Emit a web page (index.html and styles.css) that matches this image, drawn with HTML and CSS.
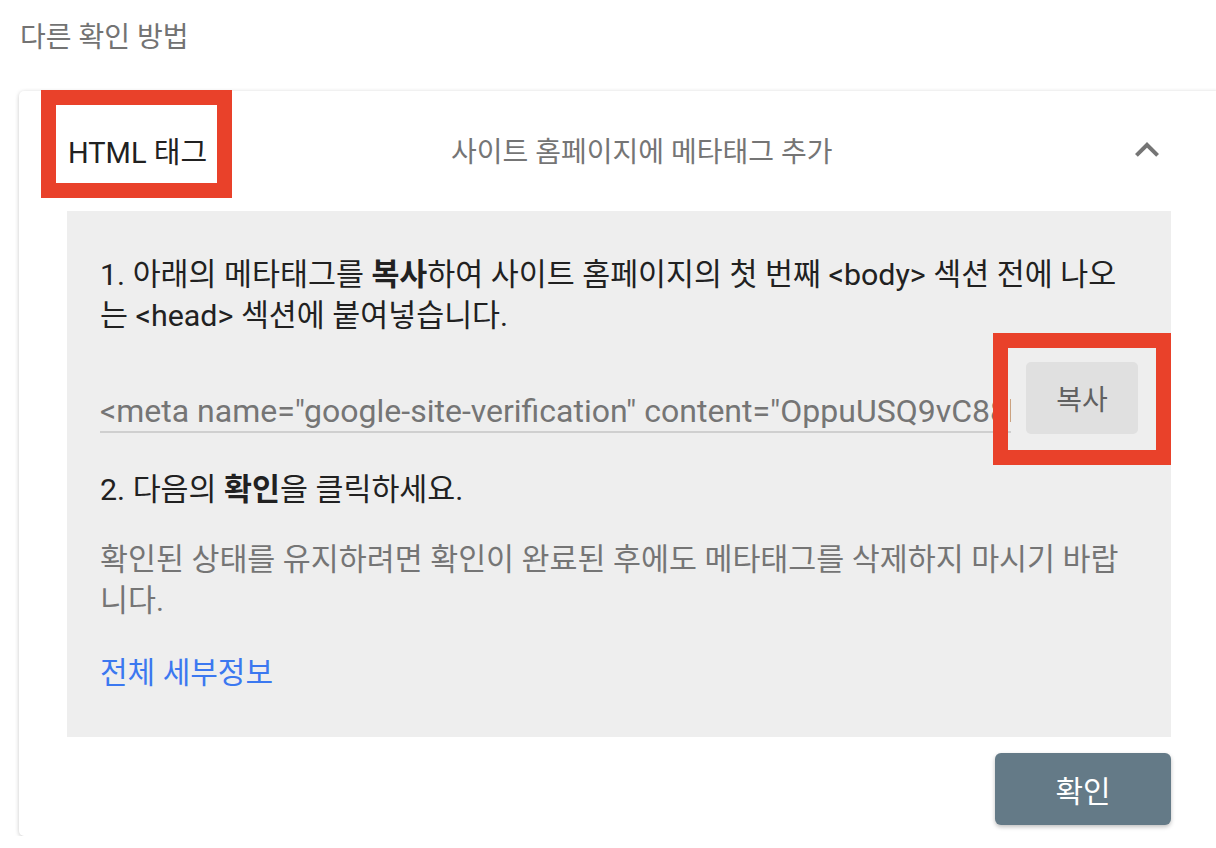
FILE: index.html
```html
<!DOCTYPE html>
<html lang="ko">
<head>
<meta charset="utf-8">
<title>다른 확인 방법</title>
<link rel="stylesheet" href="styles.css">
</head>
<body>
<div class="page">
  <h2 class="section-title">다른 확인 방법</h2>
  <div class="card">
    <div class="card-header">
      <div class="method-name">HTML 태그</div>
      <div class="method-desc">사이트 홈페이지에 메타태그 추가</div>
      <div class="chevron">
        <svg viewBox="0 0 24 24" width="48" height="48"><path d="M12 8l-6 6 1.41 1.41L12 10.83l4.59 4.58L18 14z" fill="#757575"/></svg>
      </div>
    </div>
    <div class="panel">
      <p class="step">1. 아래의 메타태그를 <b>복사</b>하여 사이트 홈페이지의 첫 번째 &lt;body&gt; 섹션 전에 나오는 &lt;head&gt; 섹션에 붙여넣습니다.</p>
      <div class="copy-row">
        <div class="meta-input">&lt;meta name="google-site-verification" content="OppuUSQ9vC88lKb3ZqXfM2cR7dT0wYhN1aE5sGvP" /&gt;</div>
        <div class="copy-btn">복사</div>
      </div>
      <p class="step step2">2. 다음의 <b>확인</b>을 클릭하세요.</p>
      <p class="note">확인된 상태를 유지하려면 확인이 완료된 후에도 메타태그를 삭제하지 마시기 바랍니다.</p>
      <a class="details" href="#">전체 세부정보</a>
    </div>
    <div class="actions">
      <div class="confirm-btn">확인</div>
    </div>
    <div class="mark mark-title"></div>
    <div class="mark mark-copy"></div>
  </div>
</div>
</body>
</html>
```
FILE: styles.css
```css
html, body {
  margin: 0;
  padding: 0;
  overflow: hidden;
  background: #ffffff;
}
body {
  font-family: Roboto, "Noto Sans CJK KR", sans-serif;
  color: #212121;
}
.page {
  padding: 20px 0 0 19px;
}
.section-title {
  margin: 0 0 0 1px;
  font-size: 28px;
  font-weight: 400;
  line-height: 36px;
  color: #737373;
  height: 71px;
}
.card {
  position: relative;
  width: 1200px;
  box-sizing: border-box;
  padding: 0 48px 11px 48px;
  background: #fff;
  border-radius: 5px 0 0 5px;
  box-shadow: 0 1px 4px rgba(0,0,0,0.22);
}
.card-header {
  display: grid;
  grid-template-columns: 383px 1fr 48px;
  align-items: center;
  height: 118px;
  padding-bottom: 2px;
  padding-left: 1px;
}
.method-name {
  font-size: 29px;
  color: #212121;
}
.method-desc {
  font-size: 28px;
  color: #757575;
}
.chevron {
  width: 48px;
  height: 48px;
}
.chevron svg { display: block; }
.panel {
  background: #eeeeee;
  padding: 43px 33px 44px 33px;
}
.step {
  margin: 0;
  font-size: 30.4px;
  line-height: 41px;
  color: #212121;
}
.step b { font-weight: 700; }
.copy-row {
  display: flex;
  align-items: flex-start;
  gap: 15px;
  margin-top: 26px;
}
.meta-input {
  width: 912px;
  box-sizing: border-box;
  padding-top: 29px;
  font-size: 32px;
  line-height: 40px;
  color: #757575;
  white-space: nowrap;
  overflow: hidden;
  border-bottom: 2px solid #cfcfcf;
}
.copy-btn {
  width: 112px;
  height: 72px;
  display: flex;
  align-items: center;
  justify-content: center;
  background: #e0e0e0;
  border-radius: 5px;
  font-size: 28px;
  color: #616161;
  flex: none;
}
.step2 {
  margin-top: 35px;
}
.note {
  margin: 29px 0 0 0;
  font-size: 30.4px;
  line-height: 41px;
  color: #757575;
}
.details {
  display: block;
  margin-top: 31px;
  font-size: 30px;
  line-height: 41px;
  color: #3b78f0;
  text-decoration: none;
}
.actions {
  display: flex;
  justify-content: flex-end;
  padding-top: 16px;
}
.confirm-btn {
  width: 176px;
  height: 72px;
  display: flex;
  align-items: center;
  justify-content: center;
  background: #647a87;
  border-radius: 6px;
  color: #ffffff;
  font-size: 30px;
  box-shadow: 0 2px 4px rgba(0,0,0,0.25);
}
.mark {
  position: absolute;
  border: 15px solid #e9412a;
  box-sizing: border-box;
}
.mark-title {
  left: 22px;
  top: -1px;
  width: 191px;
  height: 108px;
}
.mark-copy {
  left: 974px;
  top: 242px;
  width: 178px;
  height: 132px;
}
```
